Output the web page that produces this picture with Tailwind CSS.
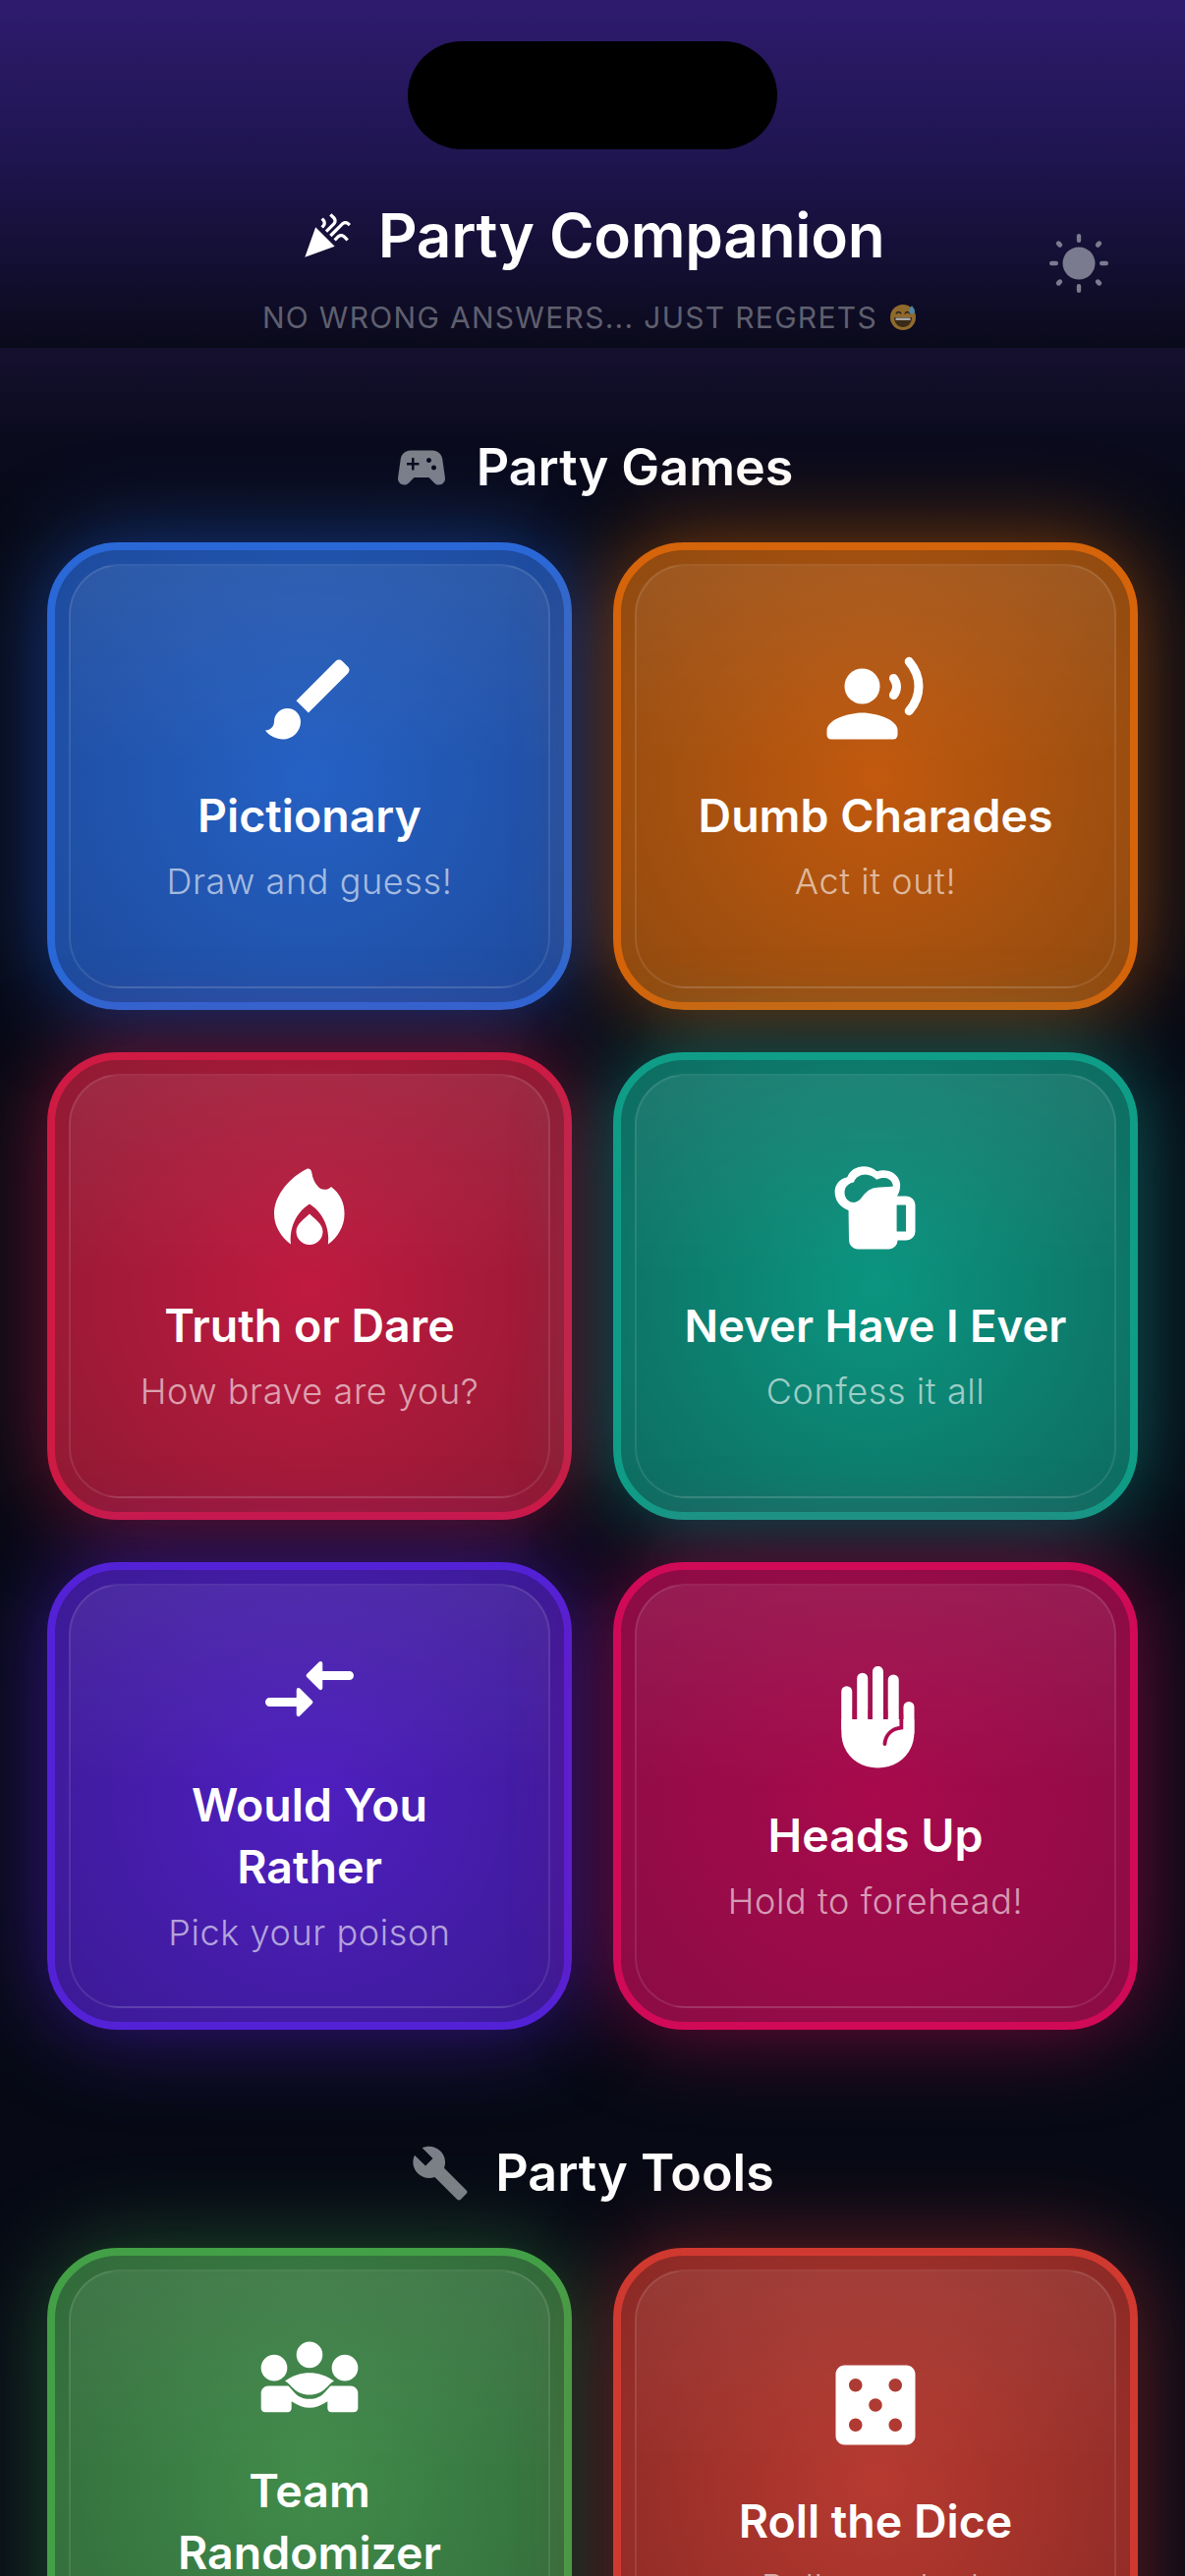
<!DOCTYPE html>
<html lang="en">
<head>
<meta charset="utf-8">
<title>Party Companion</title>
<script src="https://cdn.jsdelivr.net/npm/@tailwindcss/browser@4"></script>
</head>
<body class="h-[2622px] overflow-hidden bg-[#070a15] text-white font-[Inter,'Noto_Sans',sans-serif]">

<header class="relative h-[354px] pt-[205px] bg-[linear-gradient(180deg,#2e1b6e_0%,#1f1550_45%,#0a0a1b_100%)]">
  <div class="absolute left-[415px] top-[42px] h-[110px] w-[376px] rounded-[55px] bg-black"></div>
  <div class="flex h-[70px] items-center justify-center gap-[27px]">
    <svg class="size-[52px] shrink-0" viewBox="0 0 24 24" fill="#fff"><path d="M2 22l14-5-9-9zM14.530 12.530l5.590-5.590c.49-.49 1.280-.49 1.770 0l.59.59 1.060-1.060-.59-.59c-1.070-1.070-2.820-1.070-3.890 0l-5.590 5.590 1.060 1.060zM10.060 6.880l-.59.59 1.060 1.060.59-.59c1.070-1.070 1.070-2.820 0-3.890l-.59-.59-1.060 1.060.59.59c.48.48.48 1.280 0 1.770zM17.060 11.880l-1.590 1.590 1.060 1.060 1.590-1.590c.49-.49 1.280-.49 1.770 0l1.610 1.610 1.060-1.060-1.610-1.610c-1.080-1.070-2.820-1.070-3.890 0zM15.060 5.880l-3.590 3.590 1.060 1.060 3.590-3.590c1.070-1.070 1.070-2.820 0-3.890l-1.590-1.590-1.060 1.060 1.590 1.590c.48.49.48 1.290 0 1.770z"/></svg>
    <h1 class="text-[62px] leading-[70px] font-semibold tracking-[-0.3px]">Party Companion</h1>
  </div>
  <div class="mt-[28px] flex h-[40px] items-center justify-center gap-[12px] pr-[6px]">
    <p class="text-[30px] leading-[40px] tracking-[1.3px] text-[#5f5f6e]">NO WRONG ANSWERS... JUST REGRETS</p>
    <svg class="size-[28px] shrink-0" viewBox="0 0 28 28">
      <circle cx="14" cy="14" r="13" fill="#8f6a2c"/>
      <path d="M5 14h18c0 6-4 10-9 10s-9-4-9-10z" fill="#3a2a18"/>
      <path d="M6.500 14.500h15v2.500h-15z" fill="#a8a8a8"/>
      <path d="M7 10.500c1-2.500 4-2.500 5 0M16 10.500c1-2.500 4-2.500 5 0" stroke="#33261a" stroke-width="1.600" fill="none"/>
      <path d="M23 2c1.500 2.500 3 3.800 3 5.500a3 3 0 0 1-6 0C20 5.800 21.500 4.500 23 2z" fill="#4d86a8"/>
    </svg>
  </div>
  <button class="absolute right-[78px] top-[238px] size-[60px]" aria-label="Toggle theme">
    <svg class="size-[60px]" viewBox="0 0 60 60" fill="#7b7b8f">
      <circle cx="30" cy="30" r="16.500"/>
      <rect x="27.800" y="0" width="4.400" height="9" rx="2.200"/>
      <rect x="27.800" y="51" width="4.400" height="9" rx="2.200"/>
      <rect x="0" y="27.800" width="9" height="4.400" rx="2.200"/>
      <rect x="51" y="27.800" width="9" height="4.400" rx="2.200"/>
      <rect x="7.500" y="7" width="5" height="7" rx="2.500" transform="rotate(-45 10 10.500)"/>
      <rect x="47.500" y="7" width="5" height="7" rx="2.500" transform="rotate(45 50 10.500)"/>
      <rect x="7.500" y="46" width="5" height="7" rx="2.500" transform="rotate(45 10 49.500)"/>
      <rect x="47.500" y="46" width="5" height="7" rx="2.500" transform="rotate(-45 50 49.500)"/>
    </svg>
  </button>
</header>

<main class="px-[48px] pt-[92px] bg-[linear-gradient(180deg,#15102f_0px,#0b0b1e_90px,#070a15_190px)]">

  <section>
    <div class="mb-[46px] flex h-[60px] items-center justify-center gap-[26px]">
      <svg class="size-[60px] shrink-0" viewBox="0 0 24 24" fill="#7d8088"><path fill-rule="evenodd" d="M21.580 16.090l-1.090-7.660C20.210 6.460 18.520 5 16.530 5H7.470C5.480 5 3.790 6.460 3.510 8.430l-1.090 7.660C2.200 17.630 3.390 19 4.940 19c.68 0 1.320-.27 1.800-.75L9 16h6l2.250 2.250c.48.48 1.130.75 1.800.75 1.560 0 2.750-1.370 2.530-2.910zM11 11H9v2H8v-2H6v-1h2V8h1v2h2v1zm4-1c-.55 0-1-.45-1-1s.45-1 1-1 1 .45 1 1-.45 1-1 1zm2 3c-.55 0-1-.45-1-1s.45-1 1-1 1 .45 1 1-.45 1-1 1z"/></svg>
      <h2 class="text-[52px] leading-[60px] font-semibold">Party Games</h2>
    </div>

    <div class="grid grid-cols-2 gap-x-[42px] gap-y-[43px]">

      <article class="h-[476px] rounded-[72px] border-[8px] border-[#2a68d8] bg-[radial-gradient(circle_at_50%_50%,#2561c4_0%,#1d4a9c_100%)] p-[14px] shadow-[0_0_90px_rgba(37,99,235,0.55)]">
        <div class="flex h-full flex-col items-center justify-center rounded-[52px] border-2 border-white/10 bg-[linear-gradient(180deg,rgba(255,255,255,0.07)_0%,rgba(255,255,255,0)_50%)] pb-[3px] text-center">
          <svg class="size-[108px] shrink-0" viewBox="0 0 24 24" fill="#fff"><path d="M7 14c-1.660 0-3 1.340-3 3 0 1.310-1.160 2-2 2 .92 1.220 2.490 2 4 2 2.210 0 4-1.790 4-4 0-1.660-1.340-3-3-3zm13.710-9.370l-1.340-1.340a.9959.9959 0 0 0-1.410 0L9 12.250 11.750 15l8.960-8.960c.39-.39.39-1.020 0-1.410z"/></svg>
          <h3 class="mt-[33px] text-[46.5px] leading-[63px] font-semibold">Pictionary</h3>
          <p class="mt-[13px] text-[36px] leading-[44px] font-light tracking-[0.6px] text-white/60">Draw and guess!</p>
        </div>
      </article>

      <article class="h-[476px] rounded-[72px] border-[8px] border-[#d5640a] bg-[radial-gradient(circle_at_50%_50%,#c2590e_0%,#8f4a10_100%)] p-[14px] shadow-[0_0_90px_rgba(234,108,10,0.55)]">
        <div class="flex h-full flex-col items-center justify-center rounded-[52px] border-2 border-white/10 bg-[linear-gradient(180deg,rgba(255,255,255,0.07)_0%,rgba(255,255,255,0)_50%)] pb-[3px] text-center">
          <svg class="size-[108px] shrink-0" viewBox="0 0 24 24"><circle cx="9" cy="9" r="4" fill="#fff"/><path fill="#fff" d="M9 15c-2.670 0-8 1.340-8 4v1a1 1 0 0 0 1 1h14a1 1 0 0 0 1-1v-1c0-2.660-5.330-4-8-4z"/><path fill="none" stroke="#fff" stroke-width="2" stroke-linecap="round" d="M16.100 7.200c.9 1.200 .9 2.600 0 3.800M19.600 3.400c2.900 3.400 2.900 7.800 0 11.200"/></svg>
          <h3 class="mt-[33px] text-[46.5px] leading-[63px] font-semibold">Dumb Charades</h3>
          <p class="mt-[13px] text-[36px] leading-[44px] font-light tracking-[0.6px] text-white/60">Act it out!</p>
        </div>
      </article>

      <article class="h-[476px] rounded-[72px] border-[8px] border-[#cf1a44] bg-[radial-gradient(circle_at_50%_50%,#c01a40_0%,#8f1a33_100%)] p-[14px] shadow-[0_0_90px_rgba(225,29,72,0.5)]">
        <div class="flex h-full flex-col items-center justify-center rounded-[52px] border-2 border-white/10 bg-[linear-gradient(180deg,rgba(255,255,255,0.07)_0%,rgba(255,255,255,0)_50%)] pb-[3px] text-center">
          <svg class="size-[108px] shrink-0" viewBox="0 0 24 24" fill="#fff"><path d="M11.300 2.900C11.900 2.600 12.400 3 12.500 3.600C12.700 5 13.200 6 13.900 6.800C14.600 7.700 16 7.800 16.900 6.900C18.900 8.400 19.900 10.500 19.900 13C19.900 15.800 18.400 18.300 16.200 19.900C16.600 17 15.500 13 12 10.800C8.500 13 7.400 17 7.800 19.900C5.600 18.300 4 15.800 4 13C4 8.500 8 4.500 11.300 2.900Z"/><path d="M12 13C13.200 14.200 15 15.300 15 17A3 3 0 0 1 9 17C9 15.300 10.800 14.200 12 13Z"/></svg>
          <h3 class="mt-[33px] text-[46.5px] leading-[63px] font-semibold">Truth or Dare</h3>
          <p class="mt-[13px] text-[36px] leading-[44px] font-light tracking-[0.6px] text-white/60">How brave are you?</p>
        </div>
      </article>

      <article class="h-[476px] rounded-[72px] border-[8px] border-[#0f9d88] bg-[radial-gradient(circle_at_50%_50%,#0b9580_0%,#0e6b60_100%)] p-[14px] shadow-[0_0_90px_rgba(20,184,166,0.5)]">
        <div class="flex h-full flex-col items-center justify-center rounded-[52px] border-2 border-white/10 bg-[linear-gradient(180deg,rgba(255,255,255,0.07)_0%,rgba(255,255,255,0)_50%)] pb-[3px] text-center">
          <svg class="size-[108px] shrink-0" viewBox="0 0 24 24" fill="#fff"><path fill-rule="evenodd" d="M5.900 12.200C3.900 11.500 2.800 9.900 2.800 8C2.800 6.300 4 5 5.600 4.700C6.200 3.200 7.700 2.300 9.300 2.300C10.400 2.300 11.500 2.700 12.300 3.400C12.900 3.200 13.700 3.100 14.400 3.200C16.200 3.400 17.600 4.800 17.600 6.500C17.600 7.500 17.300 8.300 16.900 9H19A2 2 0 0 1 21 11V17A2 2 0 0 1 19 19H17A2 2 0 0 1 15 21H8A2 2 0 0 1 6 19ZM5 8.200C5 6.900 6 6 7.100 5.900C7.400 4.800 8.500 4.100 9.700 4.100C10.700 4.100 11.600 4.600 12.300 5.300C12.900 4.900 13.600 4.800 14.200 4.900C15.200 5 15.900 5.800 16 6.800C14.600 7 13.200 6.900 11.900 7.100C10.500 7.300 9.400 8.500 8.900 9.300C8.300 10.200 7.500 10.500 6.800 10.400C5.800 10.300 5 9.300 5 8.200ZM16.800 11H18.900V17H16.800Z"/></svg>
          <h3 class="mt-[33px] text-[45.5px] leading-[63px] font-semibold">Never Have I Ever</h3>
          <p class="mt-[13px] text-[36px] leading-[44px] font-light tracking-[0.6px] text-white/60">Confess it all</p>
        </div>
      </article>

      <article class="h-[476px] rounded-[72px] border-[8px] border-[#5322d6] bg-[radial-gradient(circle_at_50%_50%,#4f1fc0_0%,#3b1a94_100%)] p-[14px] shadow-[0_0_90px_rgba(91,33,230,0.55)]">
        <div class="flex h-full flex-col items-center justify-center rounded-[52px] border-2 border-white/10 bg-[linear-gradient(180deg,rgba(255,255,255,0.07)_0%,rgba(255,255,255,0)_50%)] pb-[3px] text-center">
          <svg class="size-[108px] shrink-0" viewBox="0 0 24 24" fill="#fff" stroke="#fff" stroke-linejoin="round"><path fill="none" stroke-width="2" stroke-linecap="round" d="M3 15H10M15 9H21"/><path stroke-width=".9" d="M9.500 12.200L12.300 15L9.500 17.800ZM14.500 6.200L11.700 9L14.500 11.800Z"/></svg>
          <h3 class="mt-[33px] text-[46.5px] leading-[63px] font-semibold">Would You<br>Rather</h3>
          <p class="mt-[13px] text-[36px] leading-[44px] font-light tracking-[0.6px] text-white/60">Pick your poison</p>
        </div>
      </article>

      <article class="h-[476px] rounded-[72px] border-[8px] border-[#d10a58] bg-[radial-gradient(circle_at_50%_50%,#a80a4c_0%,#8a0c45_100%)] p-[14px] shadow-[0_0_90px_rgba(225,10,95,0.5)]">
        <div class="flex h-full flex-col items-center justify-center rounded-[52px] border-2 border-white/10 bg-[linear-gradient(180deg,rgba(255,255,255,0.07)_0%,rgba(255,255,255,0)_50%)] pb-[3px] text-center">
          <svg class="size-[108px] shrink-0" viewBox="0 0 24 24"><path stroke="#fff" stroke-width="2.450" stroke-linecap="round" fill="none" d="M5.500 5.700V14M9.050 2.700V14M12.550 1.200V14M16.050 3.100V14M19.550 9.200V15"/><path fill="#fff" d="M4.300 12H20.750V15C20.750 19.800 17 23 12.500 23C8 23 4.300 19.800 4.300 15Z"/><path fill="none" stroke="#ae0b50" stroke-width=".85" stroke-linecap="round" d="M17.850 11V13.900C15.800 14 14.200 15.500 14.100 17.600"/><path fill="none" stroke="#ae0b50" stroke-width=".9" d="M7.300 10V11.600M10.800 10V11.600M14.300 10V11.600"/></svg>
          <h3 class="mt-[33px] text-[46.5px] leading-[63px] font-semibold">Heads Up</h3>
          <p class="mt-[13px] text-[36px] leading-[44px] font-light tracking-[0.6px] text-white/60">Hold to forehead!</p>
        </div>
      </article>
    </div>
  </section>

  <section class="mt-[116px]">
    <div class="mb-[46px] flex h-[60px] items-center justify-center gap-[26px]">
      <svg class="size-[60px] shrink-0" viewBox="0 0 24 24" fill="#7d8088"><path d="M22.700 19l-9.100-9.100c.9-2.300.4-5-1.500-6.900-2-2-5-2.400-7.400-1.300L9 6 6 9 1.600 4.700C.4 7.100.9 10.100 2.900 12.100c1.900 1.900 4.600 2.400 6.900 1.500l9.100 9.100c.4.4 1 .4 1.400 0l2.300-2.300c.5-.4.5-1.100.1-1.400z"/></svg>
      <h2 class="text-[52px] leading-[60px] font-semibold">Party Tools</h2>
    </div>

    <div class="grid grid-cols-2 gap-x-[42px] gap-y-[43px]">
      <article class="h-[476px] rounded-[72px] border-[8px] border-[#43a047] bg-[radial-gradient(circle_at_50%_50%,#418c4a_0%,#31693a_100%)] p-[14px] shadow-[0_0_90px_rgba(67,160,71,0.45)]">
        <div class="flex h-full flex-col items-center justify-center rounded-[52px] border-2 border-white/10 bg-[linear-gradient(180deg,rgba(255,255,255,0.07)_0%,rgba(255,255,255,0)_50%)] pb-[3px] text-center">
          <svg class="size-[108px] shrink-0" viewBox="33 -28.500 324 324" fill="#fff"><circle cx="195" cy="73" r="40"/><circle cx="87" cy="113" r="40"/><circle cx="303" cy="113" r="40"/><path d="M120 153C145 135 170 128 195 128C220 128 245 135 270 153C250 163 240 195 195 195C150 195 140 163 120 153Z"/><path d="M47 190C47 178 57 168 70 168H130C145 180 155 208 195 208C235 208 245 180 260 168H320C333 168 343 178 343 190V236C343 243 337 248 330 248H262C255 248 250 243 250 236V215C230 228 212 235 195 235C178 235 160 228 140 215V236C140 243 135 248 128 248H60C53 248 47 243 47 236Z"/></svg>
          <h3 class="mt-[33px] text-[46.5px] leading-[63px] font-semibold">Team<br>Randomizer</h3>
          <p class="mt-[13px] text-[36px] leading-[44px] font-light tracking-[0.6px] text-white/60">Split into teams</p>
        </div>
      </article>

      <article class="h-[476px] rounded-[72px] border-[8px] border-[#d0392f] bg-[radial-gradient(circle_at_50%_50%,#b73a30_0%,#8a2925_100%)] p-[14px] shadow-[0_0_90px_rgba(229,57,53,0.45)]">
        <div class="flex h-full flex-col items-center justify-center rounded-[52px] border-2 border-white/10 bg-[linear-gradient(180deg,rgba(255,255,255,0.07)_0%,rgba(255,255,255,0)_50%)] pb-[3px] text-center">
          <svg class="size-[108px] shrink-0" viewBox="0 0 24 24" fill="#fff"><path fill-rule="evenodd" d="M19 3H5c-1.100 0-2 .9-2 2v14c0 1.100.9 2 2 2h14c1.100 0 2-.9 2-2V5c0-1.100-.9-2-2-2zM7.500 18c-.83 0-1.500-.67-1.500-1.500S6.670 15 7.500 15s1.500.67 1.500 1.500S8.330 18 7.500 18zm0-9C6.670 9 6 8.330 6 7.500S6.670 6 7.500 6 9 6.670 9 7.500 8.330 9 7.500 9zm4.500 4.500c-.83 0-1.500-.67-1.500-1.500s.67-1.500 1.500-1.500 1.500.67 1.500 1.500-.67 1.500-1.500 1.500zm4.500 4.500c-.83 0-1.500-.67-1.500-1.500s.67-1.500 1.500-1.500 1.500.67 1.500 1.500-.67 1.500-1.500 1.500zm0-9c-.83 0-1.500-.67-1.500-1.500S15.670 6 16.500 6s1.500.67 1.500 1.500S17.330 9 16.500 9z"/></svg>
          <h3 class="mt-[33px] text-[46.5px] leading-[63px] font-semibold">Roll the Dice</h3>
          <p class="mt-[13px] text-[36px] leading-[44px] font-light tracking-[0.6px] text-white/60">Roll your luck</p>
        </div>
      </article>
    </div>
  </section>
</main>
</body>
</html>
